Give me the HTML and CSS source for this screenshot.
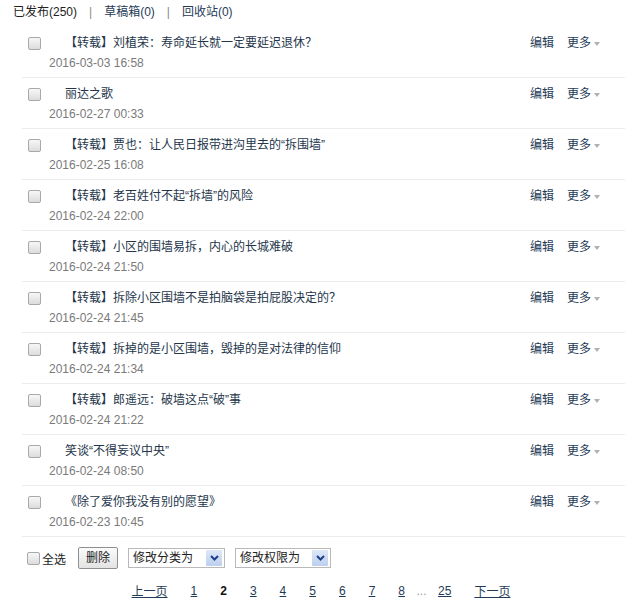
FILE: index.html
```html
<!DOCTYPE html>
<html lang="zh">
<head>
<meta charset="utf-8">
<link rel="stylesheet" href="styles.css">
</head>
<body>
<div class="page">
  <div class="tabs">
    <span class="tab current">已发布(250)</span>
    <span class="sep">|</span>
    <a class="tab" href="#">草稿箱(0)</a>
    <span class="sep">|</span>
    <a class="tab" href="#">回收站(0)</a>
  </div>

  <ul class="list">
    <li class="row">
      <span class="cb"></span>
      <div class="info"><div class="title">【转载】刘植荣：寿命延长就一定要延迟退休？</div><div class="date">2016-03-03 16:58</div></div>
      <div class="ops"><a href="#">编辑</a><a href="#" class="more">更多<i class="caret"></i></a></div>
    </li>
    <li class="row">
      <span class="cb"></span>
      <div class="info"><div class="title">丽达之歌</div><div class="date">2016-02-27 00:33</div></div>
      <div class="ops"><a href="#">编辑</a><a href="#" class="more">更多<i class="caret"></i></a></div>
    </li>
    <li class="row">
      <span class="cb"></span>
      <div class="info"><div class="title">【转载】贾也：让人民日报带进沟里去的“拆围墙”</div><div class="date">2016-02-25 16:08</div></div>
      <div class="ops"><a href="#">编辑</a><a href="#" class="more">更多<i class="caret"></i></a></div>
    </li>
    <li class="row">
      <span class="cb"></span>
      <div class="info"><div class="title">【转载】老百姓付不起“拆墙”的风险</div><div class="date">2016-02-24 22:00</div></div>
      <div class="ops"><a href="#">编辑</a><a href="#" class="more">更多<i class="caret"></i></a></div>
    </li>
    <li class="row">
      <span class="cb"></span>
      <div class="info"><div class="title">【转载】小区的围墙易拆，内心的长城难破</div><div class="date">2016-02-24 21:50</div></div>
      <div class="ops"><a href="#">编辑</a><a href="#" class="more">更多<i class="caret"></i></a></div>
    </li>
    <li class="row">
      <span class="cb"></span>
      <div class="info"><div class="title">【转载】拆除小区围墙不是拍脑袋是拍屁股决定的？</div><div class="date">2016-02-24 21:45</div></div>
      <div class="ops"><a href="#">编辑</a><a href="#" class="more">更多<i class="caret"></i></a></div>
    </li>
    <li class="row">
      <span class="cb"></span>
      <div class="info"><div class="title">【转载】拆掉的是小区围墙，毁掉的是对法律的信仰</div><div class="date">2016-02-24 21:34</div></div>
      <div class="ops"><a href="#">编辑</a><a href="#" class="more">更多<i class="caret"></i></a></div>
    </li>
    <li class="row">
      <span class="cb"></span>
      <div class="info"><div class="title">【转载】郎遥远：破墙这点“破”事</div><div class="date">2016-02-24 21:22</div></div>
      <div class="ops"><a href="#">编辑</a><a href="#" class="more">更多<i class="caret"></i></a></div>
    </li>
    <li class="row">
      <span class="cb"></span>
      <div class="info"><div class="title">笑谈“不得妄议中央”</div><div class="date">2016-02-24 08:50</div></div>
      <div class="ops"><a href="#">编辑</a><a href="#" class="more">更多<i class="caret"></i></a></div>
    </li>
    <li class="row">
      <span class="cb"></span>
      <div class="info"><div class="title">《除了爱你我没有别的愿望》</div><div class="date">2016-02-23 10:45</div></div>
      <div class="ops"><a href="#">编辑</a><a href="#" class="more">更多<i class="caret"></i></a></div>
    </li>
  </ul>

  <div class="actions">
    <span class="cb"></span>
    <span class="all">全选</span>
    <span class="btn">删除</span>
    <span class="select"><span class="sel-text">修改分类为</span><span class="sel-btn"><svg width="9" height="6" viewBox="0 0 9 6"><path d="M1 1 L4.5 4.5 L8 1" fill="none" stroke="#1d3f8a" stroke-width="2"/></svg></span></span>
    <span class="select"><span class="sel-text">修改权限为</span><span class="sel-btn"><svg width="9" height="6" viewBox="0 0 9 6"><path d="M1 1 L4.5 4.5 L8 1" fill="none" stroke="#1d3f8a" stroke-width="2"/></svg></span></span>
  </div>

  <div class="pager">
    <a href="#">上一页</a>
    <a href="#">1</a>
    <span class="cur">2</span>
    <a href="#">3</a>
    <a href="#">4</a>
    <a href="#">5</a>
    <a href="#">6</a>
    <a href="#">7</a>
    <a href="#">8</a>
    <span class="dots">...</span>
    <a href="#">25</a>
    <a href="#">下一页</a>
  </div>
</div>
</body>
</html>
```

FILE: styles.css
```css
html, body {
  margin: 0;
  padding: 0;
  background: #fff;
}
body {
  font-family: "Liberation Sans", "Noto Sans CJK SC", sans-serif;
  font-size: 12px;
  color: #333;
}
a {
  color: #1f3b57;
  text-decoration: none;
}
.page {
  width: 629px;
}
.tabs {
  display: flex;
  align-items: center;
  padding: 4px 0 7px 13px;
  line-height: 16px;
  height: 16px;
}
.tab.current {
  color: #222;
}
.sep {
  color: #8a8a8a;
  margin: 0 12px;
}
.list {
  list-style: none;
  margin: 0;
  padding: 0;
}
.row {
  display: flex;
  align-items: flex-start;
  margin-left: 22px;
  margin-right: 4px;
  padding: 6px 0 4px;
  border-bottom: 1px solid #ececec;
  height: 40px;
}
.cb {
  display: inline-block;
  box-sizing: border-box;
  width: 13px;
  height: 13px;
  border: 1px solid #a9a9a9;
  border-radius: 2px;
  background: linear-gradient(#f7f7f7, #dcdcdc);
  flex: none;
}
.row .cb {
  margin: 4px 0 0 6px;
}
.info {
  margin-left: 8px;
  flex: 1;
}
.title {
  line-height: 20px;
  padding-left: 16px;
  color: #24354a;
}
.date {
  line-height: 20px;
  color: #7a7a7a;
}
.ops {
  display: flex;
  align-items: center;
  line-height: 20px;
  width: 95px;
  flex: none;
}
.ops a {
  color: #1f3b57;
}
.ops .more {
  margin-left: 13px;
  display: flex;
  align-items: center;
}
.caret {
  display: inline-block;
  width: 0;
  height: 0;
  margin-left: 3px;
  margin-top: 1px;
  border-left: 3.5px solid transparent;
  border-right: 3.5px solid transparent;
  border-top: 4px solid #b0b0b0;
}
.actions {
  display: flex;
  align-items: center;
  height: 40px;
  padding-left: 27px;
  margin-top: 1px;
}
.all {
  margin-left: 2px;
  color: #222;
}
.btn {
  margin-left: 12px;
  box-sizing: border-box;
  height: 22px;
  width: 40px;
  line-height: 20px;
  text-align: center;
  border: 1px solid #8f8f8f;
  border-radius: 2px;
  background: linear-gradient(#fbfbfb, #e3e3e3);
  color: #222;
}
.select {
  display: flex;
  align-items: center;
  box-sizing: border-box;
  height: 20px;
  width: 97px;
  margin-left: 10px;
  border: 1px solid #b9b9b9;
  background: #fff;
  padding: 0 2px 0 4px;
  color: #222;
}
.select + .select {
  width: 96px;
}
.sel-text {
  flex: 1;
  line-height: 18px;
}
.sel-btn {
  width: 16px;
  height: 16px;
  display: flex;
  align-items: center;
  justify-content: center;
  background: linear-gradient(#dde8f8, #bccfee);
  border-radius: 1px;
}
.pager {
  display: flex;
  align-items: center;
  padding-left: 120px;
  height: 25px;
}
.pager a {
  margin: 0 11.5px;
  color: #1f3b57;
  text-decoration: underline;
}
.pager .cur {
  margin: 0 11.5px;
  font-weight: bold;
  color: #111;
}
.pager .dots {
  color: #999;
}
```
